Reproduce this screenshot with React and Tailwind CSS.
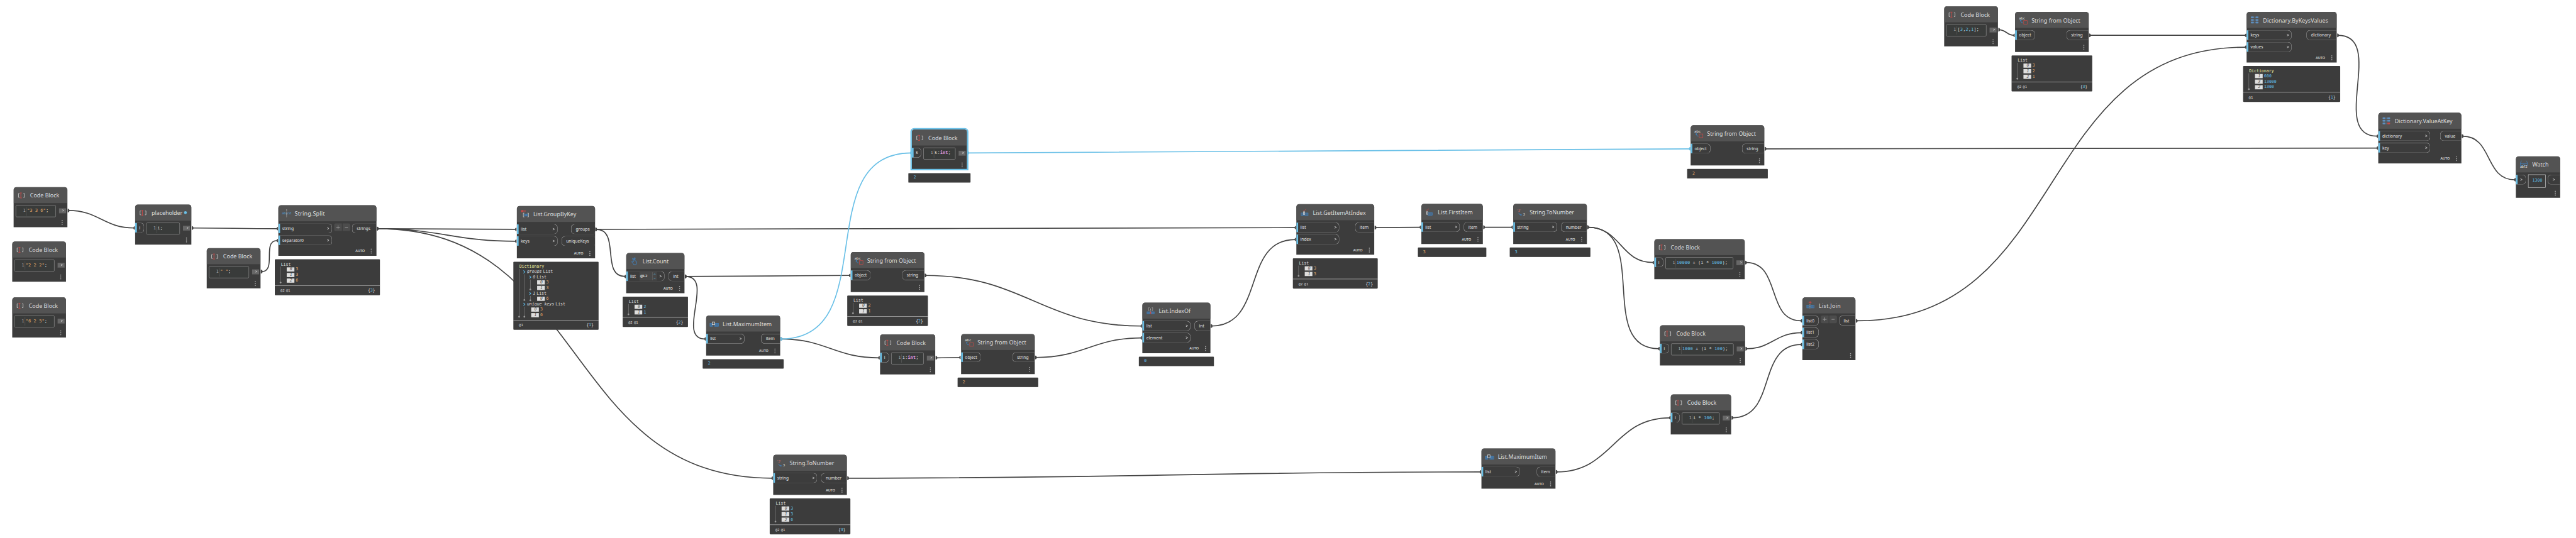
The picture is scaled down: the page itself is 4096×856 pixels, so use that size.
import { useLayoutEffect, useRef } from 'react';

const MONO = "font-['DejaVu_Sans_Mono','Liberation_Mono',monospace]";
const BLUE = '#3f85c6';
const RED = '#c34a48';

/* ---------- data ---------- */

const S = (t) => ({ t, c: 'text-[#e0a568]' });
const N = (t) => ({ t, c: 'text-[#62bde6]' });
const P = (t) => ({ t, c: 'text-[#dcdcdc]' });
const K = (t) => ({ t, c: 'text-[#e39be8] font-bold' });

const codeNode = (id, x, y, w, code, extra = {}) => ({ id, x, y, w, h: 115, icon: 'code', title: 'Code Block', code, ...extra });

const rows = (...r) => r.map(([k, v]) => ({ k, v }));

// Advance width of each node title; tracking is tuned to it at layout time.
const TITLE_WIDTHS = {
  'Code Block': 83.5, placeholder: 88.5, 'String.Split': 86.5, 'List.GroupByKey': 123, 'List.Count': 75,
  'List.MaximumItem': 140.5, 'String from Object': 140, 'String.ToNumber': 127.5, 'List.IndexOf': 91.5,
  'List.GetItemAtIndex': 151.5, 'List.FirstItem': 100.5, 'List.Join': 63, 'Dictionary.ByKeysValues': 186.5,
  'Dictionary.ValueAtKey': 165, Watch: 46.5,
};

const NODES = [
  codeNode('a1', 39.1, 536, 153.8, [S('"3 3 6"'), P(';')]),
  codeNode('a2', 35.2, 692, 153.8, [S('"2 2 2"'), P(';')]),
  codeNode('a3', 35.2, 852, 153.8, [S('"6 2 5"'), P(';')]),
  codeNode('ph', 387.1, 586, 161, [P('i;')], { title: 'placeholder', renamed: true, codeIn: 'i', codeInW: 25.5 }),
  codeNode('sep', 592, 711, 153.8, [S('" "'), P(';')]),
  {
    id: 'split', x: 796.9, y: 588, w: 281, h: 145, icon: 'split', title: 'String.Split', auto: true, plus: true,
    inputs: ['string', 'separator0'], inW: 154, chevron: true, outputs: [['strings', 68.7]],
    preview: { head: 'List', items: rows(['0', S('3')], ['1', S('3')], ['2', S('6')]), levels: ['2', '1'], count: '3' },
  },
  {
    id: 'group', x: 1479.9, y: 590, w: 223.8, h: 150, icon: 'group', title: 'List.GroupByKey', auto: true,
    inputs: ['list', 'keys'], inW: 117, chevron: true, outputs: [['groups', 67.6], ['uniqueKeys', 95]],
    preview: { nested: true, head: 'Dictionary', levels: ['1'], count: '1' },
  },
  {
    id: 'count', x: 1793, y: 725, w: 167, h: 115, icon: 'count', title: 'List.Count', auto: true,
    inputs: ['list'], inW: 109.5, chevron: true, level: '@L2', outputs: [['int', 45]],
    preview: { head: 'List', items: rows(['0', N('2')], ['1', N('1')]), levels: ['2', '1'], count: '2' },
  },
  {
    id: 'max', x: 2022.1, y: 904, w: 211.8, h: 115, icon: 'max', title: 'List.MaximumItem', auto: true,
    inputs: ['list'], inW: 109.6, chevron: true, outputs: [['item', 53.5]], value: N('2'),
  },
  {
    id: 'sfo1', x: 2436, y: 722, w: 211, h: 115, icon: 'sfo', title: 'String from Object',
    inputs: ['object'], inW: 56.6, outputs: [['string', 63]],
    preview: { head: 'List', items: rows(['0', S('2')], ['1', S('1')]), levels: ['2', '1'], count: '2' },
  },
  codeNode('kint', 2611, 371, 158, [P('k:'), K('int'), P(';')], { codeIn: 'k', codeInW: 27, selected: true, value: N('2') }),
  codeNode('iint', 2520, 958, 158, [P('i:'), K('int'), P(';')], { codeIn: 'i', codeInW: 25.5 }),
  {
    id: 'sfo2', x: 2751.8, y: 957, w: 211, h: 115, icon: 'sfo', title: 'String from Object',
    inputs: ['object'], inW: 56.6, outputs: [['string', 63]], value: S('2'),
  },
  {
    id: 'num1', x: 2214, y: 1303, w: 211, h: 115, icon: 'num', title: 'String.ToNumber', auto: true,
    inputs: ['string'], inW: 126, chevron: true, outputs: [['number', 73]],
    preview: { head: 'List', items: rows(['0', N('3')], ['1', N('3')], ['2', N('6')]), levels: ['2', '1'], count: '3' },
  },
  {
    id: 'index', x: 3271, y: 867, w: 195, h: 145, icon: 'index', title: 'List.IndexOf', auto: true,
    inputs: ['list', 'element'], inW: 138, chevron: true, outputs: [['int', 45]], value: N('0'),
  },
  {
    id: 'get', x: 3712.1, y: 585, w: 223, h: 145, icon: 'get', title: 'List.GetItemAtIndex', auto: true,
    inputs: ['list', 'index'], inW: 123, chevron: true, outputs: [['item', 54]],
    preview: { head: 'List', items: rows(['0', S('3')], ['1', S('3')]), levels: ['2', '1'], count: '2' },
  },
  {
    id: 'first', x: 4070, y: 584, w: 176, h: 115, icon: 'first', title: 'List.FirstItem', auto: true,
    inputs: ['list'], inW: 110, chevron: true, outputs: [['item', 54]], value: S('3'),
  },
  {
    id: 'num2', x: 4332.9, y: 584, w: 211, h: 115, icon: 'num', title: 'String.ToNumber', auto: true,
    inputs: ['string'], inW: 126, chevron: true, outputs: [['number', 73]], value: N('3'),
  },
  codeNode('c1', 4737, 685, 259, [N('10000'), P(' + (i * '), N('1000'), P(');')], { codeIn: 'i', codeInW: 25.5 }),
  codeNode('c2', 4753, 932, 244, [N('1000'), P(' + (i * '), N('100'), P(');')], { codeIn: 'i', codeInW: 25.5 }),
  codeNode('c3', 4784.2, 1130, 173, [P('i * '), N('100'), P(';')], { codeIn: 'i', codeInW: 25.5 }),
  {
    id: 'join', x: 5161, y: 852, w: 152, h: 179.5, icon: 'join', title: 'List.Join', plus: true,
    inputs: ['list0', 'list1', 'list2'], inW: 46.7, outputs: [['list', 46.5]],
  },
  {
    id: 'sfo3', x: 4841, y: 359.3, w: 211, h: 115, icon: 'sfo', title: 'String from Object',
    inputs: ['object'], inW: 56.6, outputs: [['string', 63]], value: S('2'),
  },
  {
    id: 'max2', x: 4242, y: 1285, w: 212, h: 115, icon: 'max', title: 'List.MaximumItem', auto: true,
    inputs: ['list'], inW: 109.6, chevron: true, outputs: [['item', 53.5]],
  },
  codeNode('arr', 5567, 18, 154, [P('['), N('3'), P(','), N('2'), P(','), N('1'), P('];')]),
  {
    id: 'sfo4', x: 5770, y: 34, w: 211, h: 115, icon: 'sfo', title: 'String from Object',
    inputs: ['object'], inW: 56.6, outputs: [['string', 63]],
    preview: { head: 'List', items: rows(['0', S('3')], ['1', S('2')], ['2', S('1')]), levels: ['2', '1'], count: '3' },
  },
  {
    id: 'dict', x: 6433, y: 34, w: 258.3, h: 145, icon: 'dict', title: 'Dictionary.ByKeysValues', auto: true,
    inputs: ['keys', 'values'], inW: 129, chevron: true, outputs: [['dictionary', 86]],
    preview: { head: 'Dictionary', items: rows(['1', N('600')], ['3', N('13000')], ['2', N('1300')]), levels: ['1'], count: '1' },
  },
  {
    id: 'vak', x: 6810.2, y: 323, w: 238, h: 145, icon: 'vak', title: 'Dictionary.ValueAtKey', auto: true,
    inputs: ['dictionary', 'key'], inW: 148.5, chevron: true, outputs: [['value', 60]],
  },
  { id: 'watch', x: 7204.2, y: 448, w: 127, h: 118.6, icon: 'watch', title: 'Watch', watch: '1300' },
];

const WIRES = [
  ['a1', 'ph', 0], ['ph', 'split', 0], ['sep', 'split', 1], ['split', 'group', 0], ['split', 'group', 1],
  ['split', 'num1', 0], ['group', 'get', 0], ['group', 'count', 0], ['count', 'sfo1', 0], ['count', 'max', 0],
  ['max', 'iint', 0], ['sfo1', 'index', 0], ['iint', 'sfo2', 0], ['sfo2', 'index', 1], ['index', 'get', 1],
  ['get', 'first', 0], ['first', 'num2', 0], ['num2', 'c1', 0], ['num2', 'c2', 0], ['num1', 'max2', 0],
  ['max2', 'c3', 0], ['c1', 'join', 0], ['c2', 'join', 1], ['c3', 'join', 2], ['join', 'dict', 1],
  ['arr', 'sfo4', 0], ['sfo4', 'dict', 0], ['sfo3', 'vak', 1], ['dict', 'vak', 0], ['vak', 'watch', 0],
  ['max', 'kint', 0, true], ['kint', 'sfo3', 0, true],
];

/* ---------- icons ---------- */

function Grid({ x, y, w, h, n }) {
  return (
    <g fill="none" stroke={BLUE} strokeWidth="1.2">
      <rect x={x} y={y} width={w} height={h} fill={BLUE} fillOpacity="0.3" />
      {Array.from({ length: n - 1 }, (_, i) => (
        <path key={i} d={`M${x + (w * (i + 1)) / n} ${y}v${h}`} />
      ))}
    </g>
  );
}

function DictCells({ last }) {
  return (
    <g fill="#5e8fbf">
      {[2.4, 9.8, 17.3].map((y, i) => (
        <g key={y}>
          <rect x="2.4" y={y} width="8.2" height="4.7" rx="1.2" />
          <rect x="12.4" y={y} width="1.4" height="4.7" opacity="0.5" />
          <rect x="15.6" y={y} width="8.2" height="4.7" rx="1.2" fill={i === 2 ? last : '#5e8fbf'} />
        </g>
      ))}
    </g>
  );
}

const ICONS = {
  code: (
    <g fill="none">
      <path d="M7 7.5H4v11h3M18 7.5h3v11h-3" stroke="#d0d0d0" strokeWidth="1.5" />
      <path d="M7.8 5.8h5.8M7.8 20.2h5.8M10.7 5.8v14.4" stroke={RED} strokeWidth="1.7" />
    </g>
  ),
  split: (
    <g>
      <text x="0.2" y="16" fontSize="10.5" fontWeight="600" fill="#4f88bd" textLength="12.3" lengthAdjust="spacingAndGlyphs">ab</text>
      <text x="15.5" y="16" fontSize="10.5" fontWeight="600" fill="#4f88bd" textLength="12" lengthAdjust="spacingAndGlyphs">cd</text>
      <path d="M13.8 1v22" stroke="#e6e6e6" strokeWidth="1.2" strokeDasharray="2.2 1.2" />
    </g>
  ),
  group: (
    <g fill="none">
      <circle cx="5" cy="4" r="3.4" fill={RED} />
      <path d="M5 3.8h10.3" stroke={RED} strokeWidth="2.6" />
      <path d="M11.3 9.6H8.6v11h2.7M20.5 9.6h2.8v11h-2.8" stroke="#d8d8d8" strokeWidth="1.4" />
      <Grid x={11.6} y={12} w={8.8} h={6.2} n={4} />
    </g>
  ),
  count: (
    <path
      d="M11 12L8.2 5.2c-.6-1.6 1.5-2.4 2.2-.9L12.6 9l1-6c.3-1.6 2.6-1.3 2.4.4l-1.2 7.4 4.2 1.4c.8.3 1.3 1 1.2 1.9l-.5 4.4-1.6 3.7H12l-2.5-3.6-3.2-3.9c-1-1.4.7-2.6 1.9-1.6l2.4 1.6z"
      fill="none" stroke={BLUE} strokeWidth="1.6" strokeLinejoin="round"
    />
  ),
  max: (
    <g>
      <Grid x={1} y={11.5} w={7.5} h={8.5} n={3} />
      <Grid x={14} y={11.5} w={11.3} h={8.5} n={5} />
      <rect x="7.6" y="7.4" width="7" height="8" fill="#535353" stroke="#e6e6e6" strokeWidth="1.4" />
    </g>
  ),
  sfo: (
    <g fill="none">
      <text x="1" y="10.2" fontSize="10" fill="#e6e6e6" textLength="17.6" lengthAdjust="spacingAndGlyphs">abc</text>
      <path d="M6.2 13.5c0 4 2 6.3 6 6.8" stroke={BLUE} strokeWidth="1.7" />
      <path d="M3.6 15.5l2.4-4 3 3.4z" fill={BLUE} />
      <rect x="14.7" y="13.8" width="10.4" height="10.4" stroke={RED} strokeWidth="1.3" />
    </g>
  ),
  num: (
    <g fill="none">
      <text x="1.6" y="11.6" fontSize="10.5" fill="#c46a68" textLength="10.6" lengthAdjust="spacingAndGlyphs">'3'</text>
      <path d="M6 15c.5 3.6 2.6 5.4 6 5.7" stroke={BLUE} strokeWidth="1.7" />
      <path d="M11 17.600l4.200 3.200-4.200 2.200z" fill={BLUE} />
      <text x="17.6" y="22.8" fontSize="11" fontWeight="500" fill="#cfcfcf">3</text>
    </g>
  ),
  index: (
    <g fill="none">
      <path d="M10.500 3.500H8v8.500h2.500M17 3.500h2.500v8.500H17" stroke="#a8a8a8" strokeWidth="1.3" />
      <path d="M13.700 5.500v9" stroke="#e6e6e6" strokeWidth="1.2" strokeDasharray="1.6 1.1" />
      <Grid x={3.4} y={15.3} w={8.4} h={5.6} n={4} />
      <Grid x={15.6} y={15.3} w={8.4} h={5.6} n={4} />
      <path d="M12 21v-4.500l1.700-2 1.700 2V21z" fill={RED} />
    </g>
  ),
  get: (
    <g fill="none">
      <path d="M10.500 5.800l2 2.400 5-5" stroke={RED} strokeWidth="1.6" />
      <Grid x={3.8} y={14.3} w={6.6} h={7.6} n={2} />
      <Grid x={13.6} y={14.3} w={10} h={7.6} n={3} />
      <rect x="10.5" y="10.6" width="3" height="8.2" stroke="#e6e6e6" strokeWidth="1.3" />
    </g>
  ),
  first: (
    <g fill="none">
      <path d="M3.500 5.600l2.400 2.600 5.500-5" stroke={RED} strokeWidth="1.6" />
      <Grid x={8.6} y={14.3} w={13} h={7.6} n={4} />
      <rect x="4.9" y="11.6" width="3.2" height="7.6" fill="#535353" stroke="#e6e6e6" strokeWidth="1.3" />
    </g>
  ),
  join: (
    <g fill="none">
      <path d="M12 -0.600v8.400M7.800 3.600h8.400" stroke={RED} strokeWidth="1.9" />
      <Grid x={2.6} y={11.3} w={7.2} h={8} n={2} />
      <Grid x={13.6} y={11.3} w={10} h={8} n={3} />
      <path d="M11.600 9v12" stroke="#e6e6e6" strokeWidth="1.1" strokeDasharray="1.5 1" />
    </g>
  ),
  dict: <DictCells last="#5e8fbf" />,
  vak: <DictCells last={RED} />,
  watch: (
    <g fill="none" stroke={BLUE} strokeWidth="1.4">
      <path d="M6.5 1.5C4 4 3.3 7 3 10M19.5 1.5C22 4 22.7 7 23 10M3 9.800h20v5.600M3 9.800v5.600M3.500 15.500h6.500l3-4 3 4h6.500" />
      <text x="2.4" y="22.6" fontSize="8.5" fontWeight="600" fill="#dcdcdc" stroke="none" textLength="20" lengthAdjust="spacingAndGlyphs">ab12</text>
    </g>
  ),
};

/* ---------- node parts ---------- */

function Title({ text }) {
  const ref = useRef(null);
  useLayoutEffect(() => {
    const el = ref.current;
    el.style.letterSpacing = '0px';
    const range = document.createRange();
    range.selectNodeContents(el);
    const scale = el.getBoundingClientRect().width / el.offsetWidth;
    const natural = range.getBoundingClientRect().width / scale;
    el.style.letterSpacing = `${(TITLE_WIDTHS[text] - natural) / text.length}px`;
  }, [text]);
  return (
    <span ref={ref} className="ml-[9px] pt-[2px] text-[16px] leading-none whitespace-pre text-[#dedede]">
      {text}
    </span>
  );
}

function Port({ label, width, chevron, level }) {
  return (
    <div
      className="flex h-[29px] shrink-0 items-center rounded-r-[11px] border border-l-0 border-[#a2a2a2] text-[12px] leading-none text-[#e2e2e2]"
      style={{ width }}
    >
      <div className="h-full w-[5px] shrink-0 bg-[#6ac0e7]" />
      <span className="ml-[6.3px] whitespace-pre">{label}</span>
      {level && (
        <div className="ml-[10px] flex h-[25px] w-[50px] items-center bg-[#474747] pl-[2px]">
          <span className="text-[10.5px] font-semibold">{level}</span>
          <div className="ml-auto flex h-[23px] w-[13px] items-center justify-center border-l border-[#6a6a6a]">
            <svg width="7" height="17" viewBox="0 0 7 17" fill="none" stroke="#5bb4e0" strokeWidth="1.3">
              <path d="M1 4l2.500-2.600L6 4M1 13l2.500 2.600L6 13" />
            </svg>
          </div>
        </div>
      )}
      {chevron && <Chevron className="mr-[6.5px] ml-auto" />}
    </div>
  );
}

function Chevron({ className }) {
  return (
    <svg className={className} width="7" height="7" viewBox="0 0 7 7" fill="none" stroke="#e2e2e2" strokeWidth="1.4">
      <path d="M0.500 0.600L6 3.500L0.500 6.400" />
    </svg>
  );
}

function OutPort({ label, width }) {
  return (
    <div
      className="mr-px flex h-[29px] items-center rounded-l-[11px] border border-r-0 border-[#a2a2a2] pl-[12.5px] text-[12px] leading-none text-[#e2e2e2]"
      style={{ width }}
    >
      {label}
    </div>
  );
}

function PlusMinus() {
  return (
    <div className="ml-[6px] flex h-[22px] gap-[2px]">
      <div className="flex w-[22px] items-center justify-center rounded-l-[4px] bg-[#4c4c4c]">
        <svg width="12" height="12" viewBox="0 0 12 12" stroke="#989898" strokeWidth="1.8"><path d="M6 .5v11M.5 6h11" /></svg>
      </div>
      <div className="flex w-[22px] items-center justify-center rounded-r-[4px] bg-[#4c4c4c]">
        <svg width="10" height="12" viewBox="0 0 10 12" stroke="#989898" strokeWidth="1.8"><path d="M.5 6h9" /></svg>
      </div>
    </div>
  );
}

function CodeBody({ node }) {
  return (
    <div className="flex pt-[6px] pr-[4px]">
      {node.codeIn ? <Port label={node.codeIn} width={node.codeInW} /> : null}
      <div className="ml-[6px] flex h-[34px] min-w-0 flex-1 items-center rounded-[3px] border border-[#a2a2a2] bg-[#393b3a] pl-[19.5px]">
        <div className={`${MONO} flex h-[23px] items-center whitespace-pre text-[12.8px] leading-none`}>
          <span className="pb-[4px] text-[#a8a8a8]">1</span>
          <span className="mx-[1.5px] h-full border-l border-dotted border-[#8a8a8a]" />
          <span className="pb-[4px]">
            {node.code.map((s, i) => (
              <span key={i} className={s.c}>{s.t}</span>
            ))}
          </span>
        </div>
      </div>
      <div className="mt-[9px] ml-[9px] flex h-[13.5px] w-[20px] items-center justify-end border-b border-[#555] bg-[#676767] pr-[4.5px]">
        <svg width="6" height="6" viewBox="0 0 7 7" fill="none" stroke="#e2e2e2" strokeWidth="1.4"><path d="M0.500 0.600L6 3.500L0.500 6.400" /></svg>
      </div>
    </div>
  );
}

function WatchBody({ value }) {
  return (
    <div className="flex pt-[6px] text-[#e2e2e2]">
      <div className="flex h-[29px] w-[28.6px] items-center rounded-r-[11px] border border-l-0 border-[#a2a2a2]">
        <div className="h-full w-[5px] bg-[#6ac0e7]" />
        <Chevron className="ml-[6.5px]" />
      </div>
      <div className={`${MONO} ml-[6.3px] h-[37.5px] w-[50px] border border-[#e8e8e8] pt-[7.5px] pl-[11px] text-[12px] leading-[14px] text-[#62bde6]`}>
        {value}
      </div>
      <div className="mr-px ml-auto flex h-[29px] w-[35.5px] items-center rounded-l-[11px] border border-r-0 border-[#a2a2a2] pl-[13px]">
        <Chevron />
      </div>
    </div>
  );
}

function PortBody({ node }) {
  return (
    <div className="flex items-start pt-[6px]">
      <div className="flex flex-col gap-[5px]">
        {node.inputs.map((l) => (
          <Port key={l} label={l} width={node.inW} chevron={node.chevron} level={node.level} />
        ))}
      </div>
      {node.plus && <PlusMinus />}
      <div className="ml-auto flex flex-col items-end gap-[5px]">
        {node.outputs.map(([l, w]) => (
          <OutPort key={l} label={l} width={w} />
        ))}
      </div>
    </div>
  );
}

function Footer({ auto }) {
  return (
    <div className="mt-auto flex h-[27px] items-center justify-end pr-[12.5px]">
      {auto && <span className="mr-[17px] text-[9.8px] leading-none font-medium text-[#e6e6e6]">AUTO</span>}
      <svg width="4" height="15" viewBox="0 0 4 15" fill="#a6a6a6">
        <circle cx="2" cy="2" r="1.6" /><circle cx="2" cy="7.5" r="1.6" /><circle cx="2" cy="13" r="1.6" />
      </svg>
    </div>
  );
}

/* ---------- previews ---------- */

function Item({ item }) {
  return (
    <div className="flex h-[16px] items-center">
      <span className="flex h-[11.5px] w-[22px] items-center justify-center bg-[#dedede] pl-[3px] text-[11.5px] leading-none text-[#4a4a4a] italic">{item.k}</span>
      <span className={`ml-[4px] ${item.v.c}`}>{item.v.t}</span>
    </div>
  );
}

function Branch({ children, className }) {
  return (
    <div className={`flex ${className}`}>
      <div className="flex w-px flex-col items-center bg-[#8f8f8f]">
        <span className="mt-auto size-[5px] shrink-0 rounded-full bg-[#9a9a9a]" />
      </div>
      <div>{children}</div>
    </div>
  );
}

function Key({ name, type }) {
  return (
    <div className="flex h-[15px] items-center">
      <svg className="mr-[4px]" width="7" height="10" viewBox="0 0 7 10" fill="none" stroke="#5bb4e0" strokeWidth="2"><path d="M1 1l4 4-4 4" /></svg>
      <span className="italic">{name}</span>
      <span className="ml-[3.5px]">{type}</span>
    </div>
  );
}

function Nested() {
  return (
    <Branch className="mb-[7px] ml-[16px] h-[139px]">
      <div className="ml-[11px]">
        <Key name="groups" type="List" />
        <Branch className="mb-[2px] ml-[3px] h-[76px]">
          <div className="ml-[13px]">
            <Key name="0" type="List" />
            <Branch className="mb-[1px] ml-[3px] h-[31px]">
              <div className="ml-[19px]">
                <Item item={{ k: '0', v: S('3') }} />
                <Item item={{ k: '1', v: S('3') }} />
              </div>
            </Branch>
            <Key name="1" type="List" />
            <Branch className="ml-[3px] h-[15px]">
              <div className="ml-[19px]"><Item item={{ k: '0', v: S('6') }} /></div>
            </Branch>
          </div>
        </Branch>
        <Key name="unique keys" type="List" />
        <Branch className="ml-[3px] h-[31px]">
          <div className="ml-[19px]">
            <Item item={{ k: '0', v: S('3') }} />
            <Item item={{ k: '1', v: S('6') }} />
          </div>
        </Branch>
      </div>
    </Branch>
  );
}

function Preview({ preview }) {
  return (
    <div className={`${MONO} flex flex-col rounded-[2px] bg-[#3c3c3c] text-[11.8px] leading-none whitespace-pre text-[#dcdcdc]`}>
      <div className={preview.head === 'Dictionary' ? 'mt-[7px] ml-[17px] h-[14px] leading-[14px] text-[#ededa0]' : 'mt-[7px] ml-[17.5px] h-[14px] leading-[14px]'}>
        {preview.head}
      </div>
      {preview.nested ? (
        <Nested />
      ) : (
        <Branch className="mb-[6px] ml-[16px]">
          <div className="ml-[17px]">
            {preview.items.map((it) => (
              <Item key={it.k} item={it} />
            ))}
          </div>
        </Branch>
      )}
      <div className="flex h-[28px] items-center justify-between border-t border-[#dedede] pr-[14px] pl-[16px]">
        <div className="flex gap-[4px] text-[10px]">
          {preview.levels.map((l) => (
            <span key={l}>@{l}</span>
          ))}
        </div>
        <span className="tracking-[-0.3px]">{'{'}<span className="text-[#62bde6]">{preview.count}</span>{'}'}</span>
      </div>
    </div>
  );
}

function Node({ node }) {
  return (
    <div className="absolute" style={{ left: node.x, top: node.y, width: node.w }}>
      <div className="flex flex-col overflow-hidden rounded-t-[8px] bg-[#3c3c3c]" style={{ height: node.h }}>
        <div className="flex h-[46px] shrink-0 items-center bg-[#535353] pl-[10px]">
          <svg width="28" height="24" viewBox="0 0 28 24" className="shrink-0 overflow-visible">{ICONS[node.icon]}</svg>
          <Title text={node.title} />
          {node.renamed && <span className="ml-[5px] size-[8px] rounded-full bg-[#6ac0e7]" />}
        </div>
        {node.code && <CodeBody node={node} />}
        {node.inputs && <PortBody node={node} />}
        {node.watch && <WatchBody value={node.watch} />}
        <Footer auto={node.auto} />
      </div>
      {node.selected && <div className="absolute -top-[4px] -left-[4px] h-[121px] w-[166px] rounded-t-[10px] border-4 border-[#6ac0e7]" />}
      {node.preview && <div className="-mx-[10px] mt-[10px]"><Preview preview={node.preview} /></div>}
      {node.value && (
        <div className={`${MONO} -mx-[10px] mt-[10px] flex h-[27.5px] items-center rounded-[2px] border-b border-[#c8c8c8] bg-[#3c3c3c] pl-[15px] text-[11.8px] leading-none`}>
          <span className={node.value.c}>{node.value.t}</span>
        </div>
      )}
    </div>
  );
}

/* ---------- wires ---------- */

const byId = Object.fromEntries(NODES.map((n) => [n.id, n]));

function Wire({ wire: [from, to, port, active] }) {
  const a = byId[from];
  const b = byId[to];
  const x0 = a.x + a.w;
  const y0 = a.y + 67.2;
  const x1 = b.x;
  const y1 = b.y + 67.2 + 34 * port;
  const sx = x0 + 3;
  const ex = x1 - 3;
  const k = 0.45 * Math.hypot(ex - sx, y1 - y0);
  const color = active ? '#6ac0e7' : '#444444';
  return (
    <g>
      <path d={`M${sx} ${y0}C${sx + k} ${y0} ${ex - k} ${y1} ${ex} ${y1}`} fill="none" stroke={color} strokeWidth="3" />
      <path d={`M${x0 + 1} ${y0 - 5.5}A5 5.5 0 0 1 ${x0 + 1} ${y0 + 5.5}Z`} fill={color} />
      <path d={`M${x1 - 1} ${y1 - 5}A4 5 0 0 0 ${x1 - 1} ${y1 + 5}Z`} fill={color} />
    </g>
  );
}

export default function App() {
  return (
    <main className="h-[856px] w-[4096px] overflow-hidden bg-white font-['Noto_Sans','Open_Sans',sans-serif]">
      <div className="relative h-[1542px] w-[7376px] origin-top-left scale-[0.5553]">
        <svg className="block" width="7376" height="1542" viewBox="0 0 7376 1542">
          {WIRES.map((w) => (
            <Wire key={w[0] + w[1] + w[2]} wire={w} />
          ))}
        </svg>
        {NODES.map((n) => (
          <Node key={n.id} node={n} />
        ))}
      </div>
    </main>
  );
}
